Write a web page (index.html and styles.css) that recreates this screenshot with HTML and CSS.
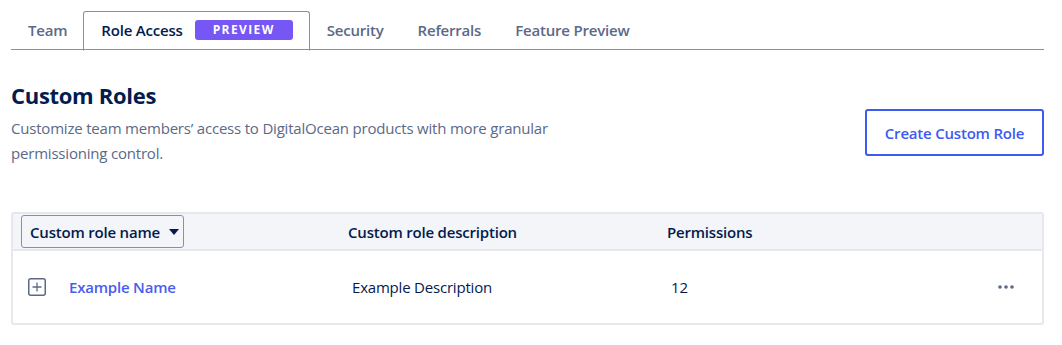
FILE: index.html
```html
<!DOCTYPE html>
<html>
<head>
<meta charset="utf-8">
<link rel="stylesheet" href="styles.css">
</head>
<body>
<div class="page">
  <nav class="tabs">
    <a class="tab">Team</a>
    <a class="tab active">Role Access <span class="badge">PREVIEW</span></a>
    <a class="tab">Security</a>
    <a class="tab">Referrals</a>
    <a class="tab">Feature Preview</a>
  </nav>

  <section class="intro">
    <div class="intro-text">
      <h1>Custom Roles</h1>
      <p>Customize team members’ access to DigitalOcean products with more granular permissioning control.</p>
    </div>
    <button class="create-btn">Create Custom Role</button>
  </section>

  <div class="table">
    <div class="thead">
      <div class="th th-name">
        <button class="sort-btn">Custom role name
          <svg width="10" height="6" viewBox="0 0 10 6"><path d="M0 0h10L5 6z" fill="#031b4e"/></svg>
        </button>
      </div>
      <div class="th">Custom role description</div>
      <div class="th">Permissions</div>
      <div class="th"></div>
    </div>
    <div class="tr">
      <div class="td td-name">
        <span class="expand">
          <svg width="18" height="18" viewBox="0 0 18 18"><rect x="0.75" y="0.75" width="16.5" height="16.5" rx="2" fill="none" stroke="#5b6987" stroke-width="1.5"/><path d="M9 4.5v9M4.5 9h9" stroke="#5b6987" stroke-width="1.3"/></svg>
        </span>
        <a class="role-link">Example Name</a>
      </div>
      <div class="td td-desc">Example Description</div>
      <div class="td td-perm">12</div>
      <div class="td td-more">
        <svg width="16" height="4" viewBox="0 0 16 4"><circle cx="2" cy="2" r="1.8" fill="#5b6987"/><circle cx="8" cy="2" r="1.8" fill="#5b6987"/><circle cx="14" cy="2" r="1.8" fill="#5b6987"/></svg>
      </div>
    </div>
  </div>
</div>
</body>
</html>
```

FILE: styles.css
```css
* { box-sizing: border-box; }
body {
  margin: 0;
  background: #ffffff;
  font-family: "Open Sans", "Liberation Sans", sans-serif;
  color: #031b4e;
}
.page {
  padding: 11px 18px 0 11px;
}
.tabs {
  display: flex;
  border-bottom: 1.5px solid #8690ab;
  height: 39px;
}
.tab {
  display: flex;
  align-items: center;
  padding: 0 16px 2px 16px;
  font-size: 15px;
  font-weight: 600;
  color: #5b6987;
  letter-spacing: -0.2px;
  margin-bottom: -1.5px;
  border: 1px solid transparent;
  border-bottom: none;
}
.tab.active {
  color: #031b4e;
  border: 1px solid #8690ab;
  border-bottom: 1.5px solid #ffffff;
  border-radius: 3px 3px 0 0;
  padding: 0 16px 2px 17px;
  margin-left: -1px;
}
.badge {
  margin-left: 12px;
  background: #7656f5;
  color: #ffffff;
  font-size: 12px;
  font-weight: 700;
  letter-spacing: 1.4px;
  border-radius: 3px;
  width: 98px;
  height: 20px;
  display: inline-flex;
  align-items: center;
  justify-content: center;
}
.intro {
  display: flex;
  justify-content: space-between;
  align-items: flex-start;
  margin-top: 31px;
}
.intro h1 {
  margin: 0;
  font-size: 22px;
  font-weight: 700;
  letter-spacing: -0.3px;
  line-height: 28px;
  color: #031b4e;
}
.intro p {
  margin: 7px 0 0;
  width: 570px;
  font-size: 15px;
  line-height: 25px;
  color: #5b6987;
  letter-spacing: -0.2px;
}
.create-btn {
  margin-top: 28px;
  width: 179px;
  height: 47px;
  border: 2px solid #3d5af1;
  border-radius: 3px;
  background: #ffffff;
  color: #3d5af1;
  font-family: inherit;
  font-size: 15px;
  font-weight: 600;
  letter-spacing: -0.2px;
}
.table {
  margin-top: 46px;
  border: 2px solid #e5e8ed;
  border-radius: 3px;
}
.thead, .tr {
  display: grid;
  grid-template-columns: 325px 319px 1fr 80px;
  align-items: center;
}
.thead {
  background: #f3f5f9;
  height: 37px;
  border-bottom: 2px solid #e5e8ed;
}
.th {
  font-size: 15px;
  font-weight: 600;
  color: #031b4e;
  letter-spacing: -0.2px;
  padding-left: 10px;
}
.th-name { padding-left: 8px; }
.sort-btn {
  display: inline-flex;
  align-items: center;
  gap: 9px;
  height: 33px;
  width: 163px;
  padding: 0 0 0 8px;
  border: 1px solid #8690ab;
  border-radius: 3px;
  background: #f3f5f9;
  font-family: inherit;
  font-size: 15px;
  font-weight: 600;
  color: #031b4e;
  letter-spacing: -0.2px;
}
.tr {
  height: 72px;
}
.td {
  font-size: 15px;
  color: #031b4e;
  letter-spacing: -0.2px;
  padding-left: 14px;
}
.td-name {
  display: flex;
  align-items: center;
  padding-left: 15px;
}
.expand { display: flex; }
.role-link {
  margin-left: 23px;
  color: #4a5cf0;
  font-weight: 600;
}
.td-more {
  display: flex;
  justify-content: flex-end;
  padding-right: 28px;
}
```
